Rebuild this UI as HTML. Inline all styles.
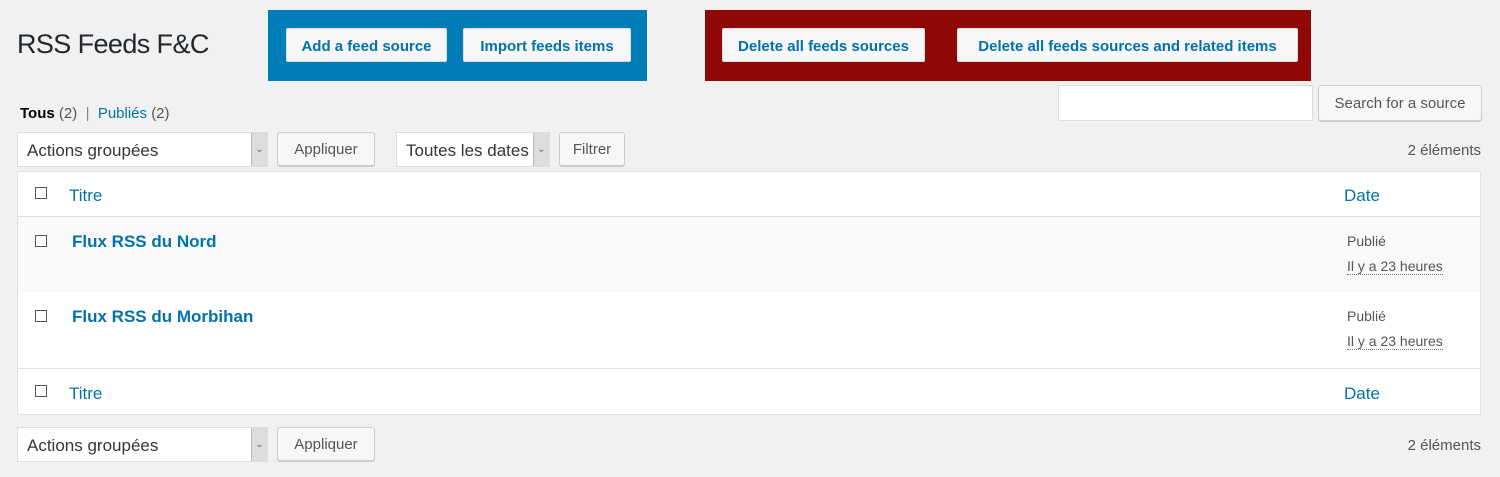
<!DOCTYPE html>
<html><head><meta charset="utf-8"><style>
*{box-sizing:border-box;margin:0;padding:0}
body{width:1500px;height:477px;background:#f1f1f1;font-family:"Liberation Sans",sans-serif;position:relative;overflow:hidden;color:#444}
.a{position:absolute}
.box{position:absolute}
.wb{position:absolute;background:#f7f7f7;border:1px solid #ddd;color:#0073aa;font-weight:bold;font-size:15px;display:flex;align-items:center;justify-content:center;border-radius:2px;padding-top:2px}
.btn{position:absolute;background:#f7f7f7;border:1px solid #ccc;box-shadow:0 1px 0 #ccc;border-radius:3px;color:#555;font-size:15px;display:flex;align-items:center;justify-content:center}
.sel{position:absolute;background:#fff;border:1px solid #ddd;font-size:17px;color:#32373c;display:flex;align-items:center;padding-left:9px;padding-top:2px}
.sel .ar{position:absolute;right:0;top:0;bottom:0;width:16px;background:#ddd;border-left:1px solid #bbb;font-size:10px;color:#666;display:flex;align-items:center;justify-content:center}
.cb{position:absolute;width:12px;height:12px;border:1px solid #555;background:#fff;left:35px}
.lnk{color:#0073aa}
.row{position:absolute;left:18px;width:1462px}
</style></head><body>
<div class="a" style="left:17px;top:29px;font-size:27px;letter-spacing:-0.6px;color:#23282d">RSS Feeds F&amp;C</div>
<div class="box" style="left:268px;top:10px;width:379px;height:71px;background:#007cb6"></div>
<div class="wb" style="left:286px;top:28px;width:161px;height:34px">Add a feed source</div>
<div class="wb" style="left:463px;top:28px;width:168px;height:34px">Import feeds items</div>
<div class="box" style="left:705px;top:10px;width:606px;height:71px;background:#8f0808"></div>
<div class="wb" style="left:722px;top:28px;width:203px;height:34px">Delete all feeds sources</div>
<div class="wb" style="left:957px;top:28px;width:341px;height:34px">Delete all feeds sources and related items</div>

<div class="a" style="left:20px;top:105px;font-size:15px"><b style="color:#000">Tous</b> <span style="color:#555">(2)</span> <span style="color:#888">&nbsp;|&nbsp;</span> <span class="lnk">Publiés</span> <span style="color:#555">(2)</span></div>
<div class="a" style="left:1058px;top:85px;width:255px;height:36px;background:#fff;border:1px solid #ddd"></div>
<div class="btn" style="left:1318px;top:85px;width:164px;height:36px">Search for a source</div>

<div class="sel" style="left:17px;top:132px;width:251px;height:35px">Actions groupées<div class="ar">&#8964;</div></div>
<div class="btn" style="left:277px;top:132px;width:98px;height:34px">Appliquer</div>
<div class="sel" style="left:396px;top:132px;width:154px;height:35px">Toutes les dates<div class="ar">&#8964;</div></div>
<div class="btn" style="left:559px;top:132px;width:66px;height:34px">Filtrer</div>
<div class="a" style="right:19px;top:142px;font-size:15px;color:#555">2 éléments</div>

<div class="a" style="left:17px;top:171px;width:1464px;height:244px;background:#fff;border:1px solid #e1e1e1"></div>
<div class="row" style="top:216px;height:1px;background:#e1e1e1"></div>
<div class="row" style="top:217px;height:75px;background:#f9f9f9"></div>
<div class="row" style="top:368px;height:1px;background:#e1e1e1"></div>
<div class="cb" style="top:187px"></div>
<div class="a lnk" style="left:69px;top:186px;font-size:17px">Titre</div>
<div class="a lnk" style="left:1344px;top:186px;font-size:17px">Date</div>
<div class="cb" style="top:235px"></div>
<div class="a lnk" style="left:72px;top:232px;font-size:17px;font-weight:bold">Flux RSS du Nord</div>
<div class="a" style="left:1347px;top:233px;font-size:14px;color:#555">Publié</div>
<div class="a" style="left:1347px;top:258px;font-size:14px;color:#555;border-bottom:1px dotted #777;line-height:16px">Il y a 23 heures</div>
<div class="cb" style="top:310px"></div>
<div class="a lnk" style="left:72px;top:307px;font-size:17px;font-weight:bold">Flux RSS du Morbihan</div>
<div class="a" style="left:1347px;top:308px;font-size:14px;color:#555">Publié</div>
<div class="a" style="left:1347px;top:333px;font-size:14px;color:#555;border-bottom:1px dotted #777;line-height:16px">Il y a 23 heures</div>
<div class="cb" style="top:385px"></div>
<div class="a lnk" style="left:69px;top:384px;font-size:17px">Titre</div>
<div class="a lnk" style="left:1344px;top:384px;font-size:17px">Date</div>

<div class="sel" style="left:17px;top:427px;width:251px;height:35px">Actions groupées<div class="ar">&#8964;</div></div>
<div class="btn" style="left:277px;top:427px;width:98px;height:34px">Appliquer</div>
<div class="a" style="right:19px;top:437px;font-size:15px;color:#555">2 éléments</div>
</body></html>
